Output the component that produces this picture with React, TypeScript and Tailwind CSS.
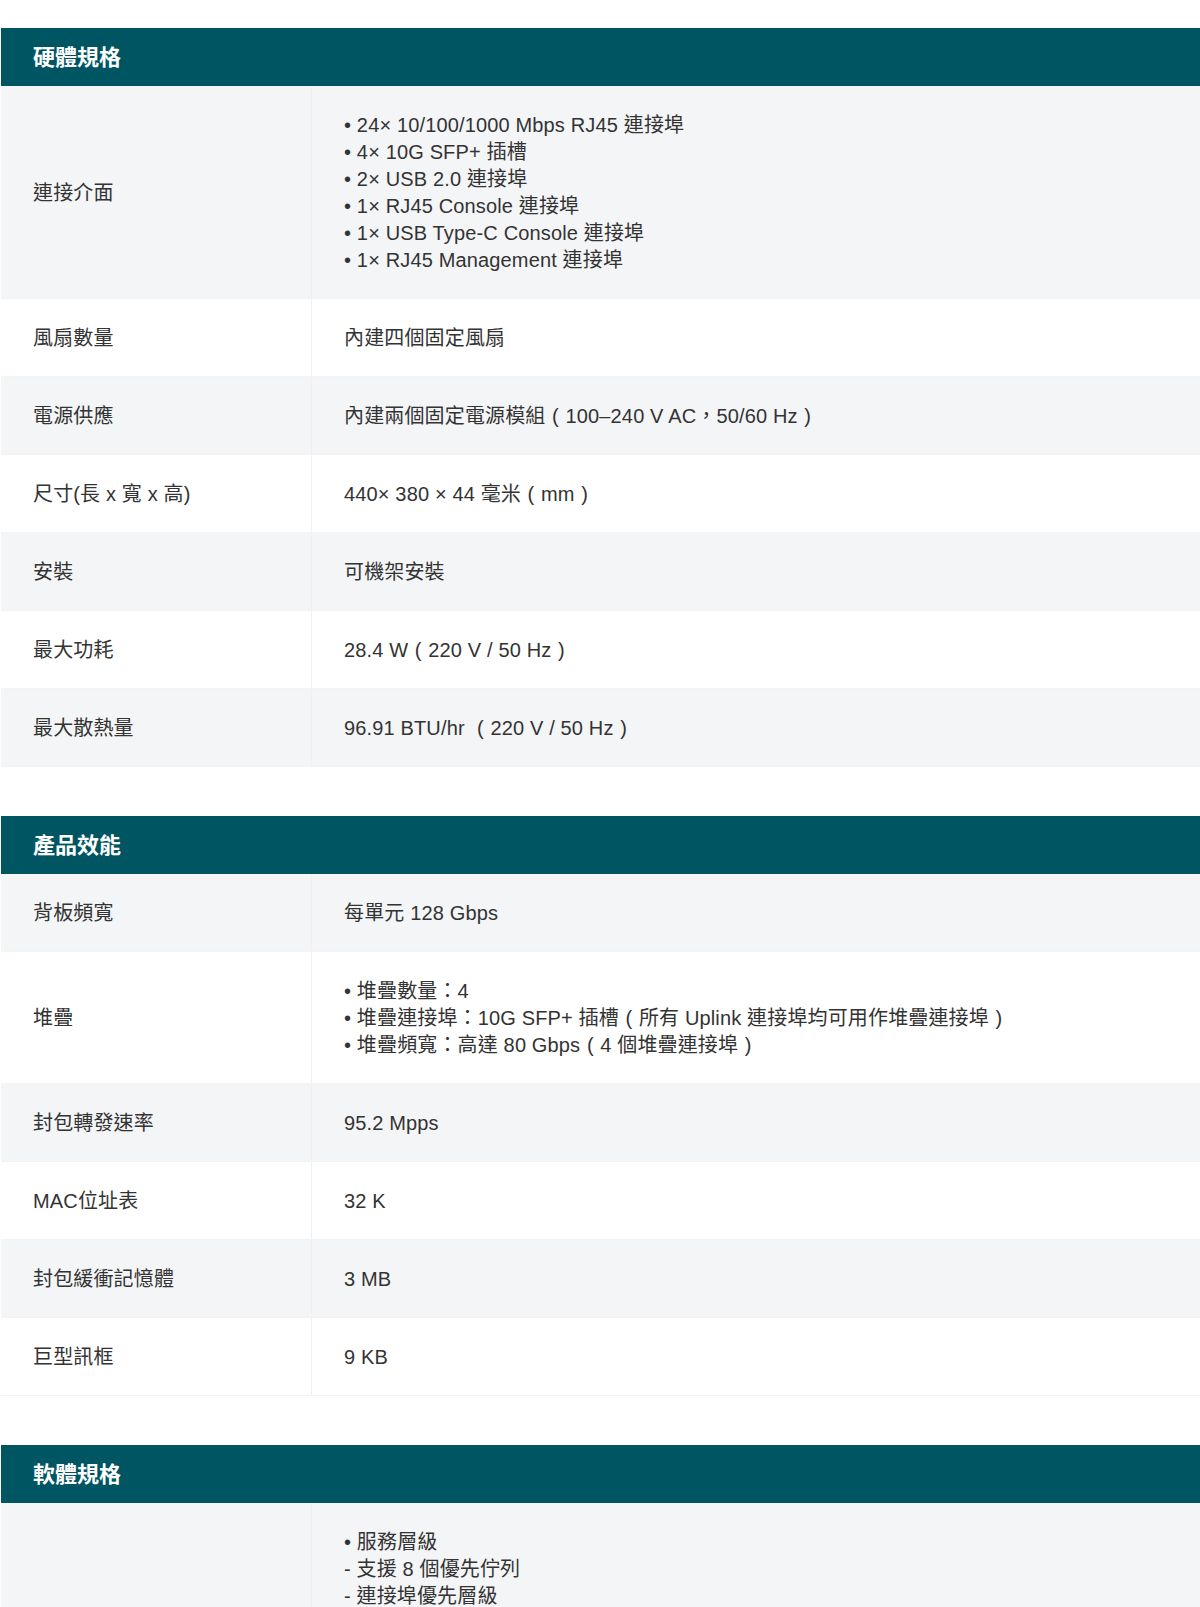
import type { ReactNode } from 'react'

type Row = { label: string; lines: string[] }

type Section = { title: string; rows: Row[] }

const SECTIONS: Section[] = [
  {
    title: '硬體規格',
    rows: [
      {
        label: '連接介面',
        lines: [
          '• 24× 10/100/1000 Mbps RJ45 連接埠',
          '• 4× 10G SFP+ 插槽',
          '• 2× USB 2.0 連接埠',
          '• 1× RJ45 Console 連接埠',
          '• 1× USB Type-C Console 連接埠',
          '• 1× RJ45 Management 連接埠',
        ],
      },
      { label: '風扇數量', lines: ['內建四個固定風扇'] },
      { label: '電源供應', lines: ['內建兩個固定電源模組（100–240 V AC，50/60 Hz）'] },
      { label: '尺寸(長 x 寬 x 高)', lines: ['440× 380 × 44 毫米（mm）'] },
      { label: '安裝', lines: ['可機架安裝'] },
      { label: '最大功耗', lines: ['28.4 W（220 V / 50 Hz）'] },
      { label: '最大散熱量', lines: ['96.91 BTU/hr （220 V / 50 Hz）'] },
    ],
  },
  {
    title: '產品效能',
    rows: [
      { label: '背板頻寬', lines: ['每單元 128 Gbps'] },
      {
        label: '堆疊',
        lines: [
          '• 堆疊數量：4',
          '• 堆疊連接埠：10G SFP+ 插槽（所有 Uplink 連接埠均可用作堆疊連接埠）',
          '• 堆疊頻寬：高達 80 Gbps（4 個堆疊連接埠）',
        ],
      },
      { label: '封包轉發速率', lines: ['95.2 Mpps'] },
      { label: 'MAC位址表', lines: ['32 K'] },
      { label: '封包緩衝記憶體', lines: ['3 MB'] },
      { label: '巨型訊框', lines: ['9 KB'] },
    ],
  },
  {
    title: '軟體規格',
    rows: [
      {
        label: '服務品質',
        lines: [
          '• 服務層級',
          '- 支援 8 個優先佇列',
          '- 連接埠優先層級',
          '- 802.1p CoS/DSCP 優先層級',
          '• 佇列排程',
          '- SP、WRR、SP+WRR',
          '• 頻寬控制',
          '- 連接埠/流量速率限制',
          '• 語音 VLAN',
        ],
      },
    ],
  },
]

// full-width parens render centred in a 1em box, like the source font does
function withParens(text: string): ReactNode[] {
  return text.split(/([（）])/).map((part, i) => {
    if (part === '（' || part === '）') {
      return (
        <span key={i} className="inline-block w-[1em] text-center">
          {part === '（' ? '(' : ')'}
        </span>
      )
    }
    return part
  })
}

function SpecRow({ row, shaded }: { row: Row; shaded: boolean }) {
  return (
    <div
      className={`grid grid-cols-[310px_1fr] border-b border-[#f3f3f3] ${shaded ? 'bg-[#f4f5f7]' : 'bg-white'}`}
    >
      <div className="flex items-center pl-[32px] pr-4 pt-[26px] pb-[24px]">{row.label}</div>
      <div className="border-l border-[#f0f0f2] pl-[32px] pr-6 pt-[26px] pb-[24px]">
        {row.lines.map((line, i) => (
          <div key={i}>{withParens(line)}</div>
        ))}
      </div>
    </div>
  )
}

export default function App() {
  return (
    <div
      className="min-h-screen bg-white pt-[28px] pl-px text-[20px] leading-[27px] tracking-[0.15px] text-[#333]"
      style={{ fontFamily: '"Liberation Sans", "Noto Sans CJK TC", Arial, sans-serif' }}
    >
      <div className="flex flex-col gap-[49px]">
        {SECTIONS.map((section) => (
          <div key={section.title}>
            <div className="flex h-[58px] items-center bg-[#005563] px-[32px] text-[22px] font-bold tracking-normal text-white">
              {section.title}
            </div>
            {section.rows.map((row, i) => (
              <SpecRow key={row.label} row={row} shaded={i % 2 === 0} />
            ))}
          </div>
        ))}
      </div>
    </div>
  )
}
